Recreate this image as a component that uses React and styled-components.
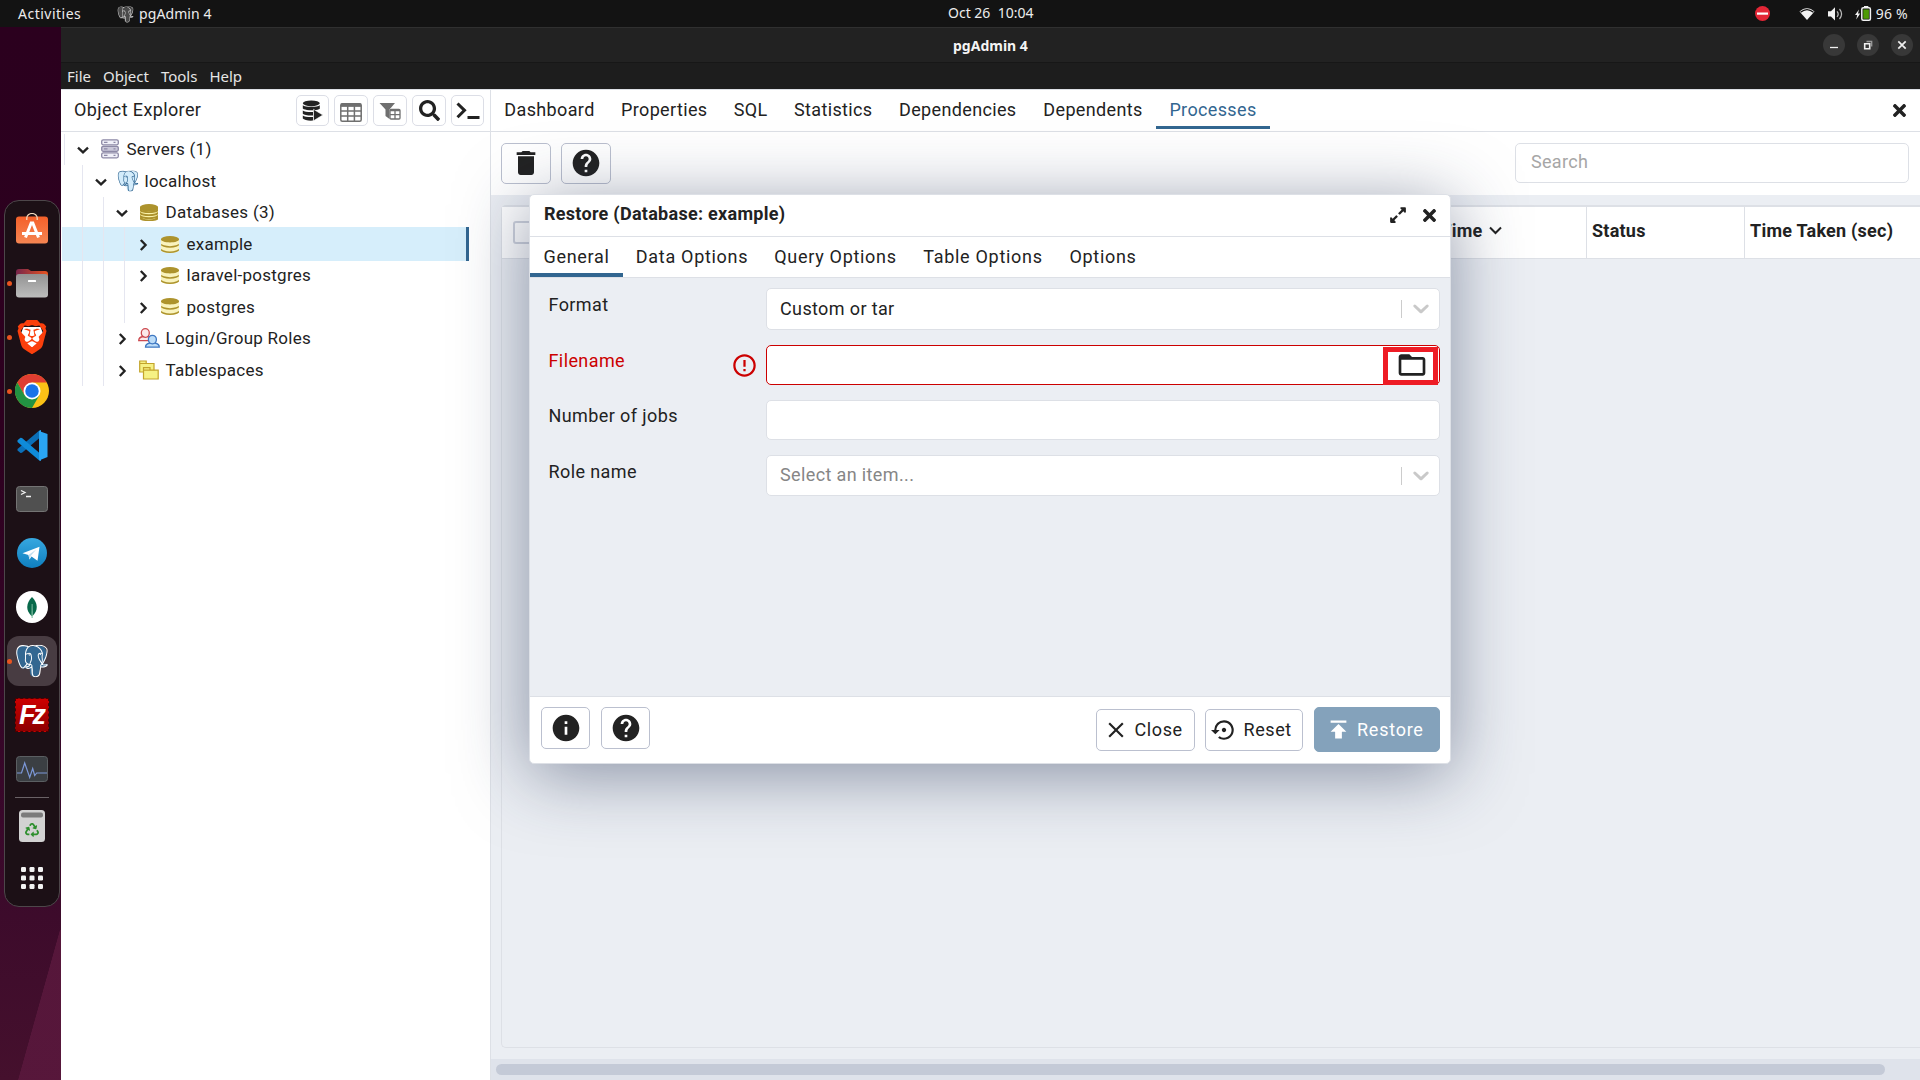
import React from "react";
import styled, { createGlobalStyle, css } from "styled-components";
import {
  MdDelete,
  MdHelp,
  MdInfo,
  MdErrorOutline,
  MdClose,
  MdPublish,
  MdSettingsBackupRestore,
  MdFolderOpen,
} from "react-icons/md";
import { FaSearch, FaTimes, FaExpandAlt, FaRecycle } from "react-icons/fa";
import { SiPostgresql, SiBrave } from "react-icons/si";

const INK = "#222222";
const LINE = "#dde0e6";
const BLUE = "#326690";
const PANEL = "#ebeef3";
const UI = `Roboto, "Liberation Sans", sans-serif`;
const SHELL = `"Noto Sans", "Open Sans", sans-serif`;

const Global = createGlobalStyle`
  html, body { margin: 0; padding: 0; overflow: hidden; background: #131313; }
  * { box-sizing: border-box; }
  svg { display: block; flex: none; }
`;

/* ---------- desktop shell ---------- */
const Screen = styled.div`
  width: 1920px;
  height: 1080px;
  display: flex;
  flex-direction: column;
  overflow: hidden;
  font-family: ${UI};
  color: ${INK};
`;

const TopBar = styled.header`
  height: 27px;
  flex: none;
  display: grid;
  grid-template-columns: 948px 1fr auto;
  align-items: center;
  background: #131313;
  color: #ececec;
  font: 14px/26px ${SHELL};
  white-space: pre;
`;

const TopLeft = styled.div`
  display: flex;
  align-items: center;
  padding-left: 18px;
`;

const Activities = styled.span`
  width: 99px;
  letter-spacing: 0.5px;
`;

const AppName = styled.span`
  margin-left: 5px;
  letter-spacing: 0.1px;
`;

const Clock = styled.span`
  padding-bottom: 2px;
`;

const TopRight = styled.div`
  display: flex;
  align-items: center;
  padding-right: 12px;
  letter-spacing: 0.25px;
`;

const Desktop = styled.div`
  flex: 1;
  display: flex;
  min-height: 0;
`;

const DockStrip = styled.aside`
  width: 61px;
  flex: none;
  padding: 173px 1px 0 4px;
  background: linear-gradient(105.6deg, rgba(84, 22, 56, 0) 0 58%, rgba(90, 24, 61, 0.85) 58.6% 100%) 0 903px / 61px 150px
      no-repeat,
    linear-gradient(#2b001e 0%, #2d001f 40%, #38082a 75%, #45102d 100%);
`;

const Dock = styled.nav`
  width: 56px;
  height: 707px;
  padding-top: 1px;
  border: 1px solid #4d474a;
  border-radius: 15px;
  background: #1c1016;
  display: flex;
  flex-direction: column;
  align-items: center;
`;

const DockItem = styled.div`
  position: relative;
  width: 50px;
  height: ${(p) => p.$h || 54}px;
  display: flex;
  align-items: center;
  justify-content: center;
`;

const DockActive = styled.div`
  width: 50px;
  height: 50px;
  border-radius: 12px;
  background: #483c42;
  display: flex;
  align-items: center;
  justify-content: center;
`;

const RunningDot = styled.i`
  position: absolute;
  left: 0;
  top: 25px;
  width: 5px;
  height: 5px;
  border-radius: 50%;
  background: #e95420;
`;

const DockRule = styled.hr`
  width: 34px;
  height: 1px;
  margin: 1px 0 0;
  border: 0;
  background: #6a6266;
`;

const FileZillaTile = styled.div`
  width: 34px;
  height: 34px;
  border: 1px dashed #4a0000;
  background: linear-gradient(#cc0000, #8e0000);
  color: #fff;
  font: italic 700 27px/32px "Liberation Sans", sans-serif;
  letter-spacing: -3px;
  padding-left: 3px;
`;

/* ---------- pgAdmin window ---------- */
const Window = styled.section`
  position: relative;
  flex: 1;
  display: flex;
  flex-direction: column;
  min-width: 0;
  background: #fff;
`;

const TitleBar = styled.div`
  height: 36px;
  flex: none;
  display: grid;
  grid-template-columns: 892px 1fr auto;
  align-items: center;
  border-top: 1px solid #303030;
  border-bottom: 1px solid #171717;
  background: #222222;
  color: #f4f4f4;
  font: 700 14px/34px ${SHELL};
`;

const WindowTitle = styled.span`
  padding-top: 2px;
  line-height: 32px;
`;

const WindowButtons = styled.div`
  display: flex;
  gap: 12px;
  padding-right: 7px;
`;

const WindowButton = styled.span`
  width: 22px;
  height: 22px;
  border-radius: 50%;
  background: #383838;
`;

const MenuBar = styled.div`
  height: 26px;
  flex: none;
  display: flex;
  gap: 12px;
  padding-left: 6px;
  background: #1d1d1d;
  color: #e6e6e6;
  font: 15px/27px ${SHELL};
`;

const Workspace = styled.div`
  flex: 1;
  display: flex;
  min-height: 0;
  border-top: 1px solid ${LINE};
`;

const Explorer = styled.div`
  width: 430px;
  flex: none;
  border-right: 1px solid ${LINE};
`;

const ExplorerHeader = styled.div`
  height: 42px;
  display: flex;
  align-items: center;
  gap: 5px;
  padding: 0 6px 0 13px;
  border-bottom: 1px solid ${LINE};
`;

const ExplorerTitle = styled.h2`
  flex: 1;
  margin: 0;
  padding-bottom: 2px;
  font-size: 18px;
  font-weight: 400;
  letter-spacing: 0.38px;
`;

const ToolButton = styled.span`
  width: ${(p) => p.$w || 34}px;
  height: 31px;
  padding-top: ${(p) => p.$drop || 0}px;
  display: flex;
  align-items: center;
  justify-content: center;
  border: 1px solid #dcdee6;
  border-radius: 5px;
`;

const Tree = styled.div`
  padding: 1.5px 0 0;
`;

const TreeRow = styled.div`
  height: 31.5px;
  width: 407px;
  margin-left: 1px;
  display: flex;
  align-items: center;
  padding-left: ${(p) => p.$indent}px;
  font-size: 17px;
  letter-spacing: 0.26px;
  white-space: nowrap;
  ${(p) =>
    p.$selected &&
    css`
      height: 34px;
      margin-top: -1px;
      margin-bottom: -1.5px;
      background: #d6eefb;
      border-right: 3px solid ${BLUE};
    `}
`;

const Guide = styled.i`
  width: ${(p) => (p.$last ? 12 : 21)}px;
  height: 100%;
  flex: none;
  border-left: 1px solid #e5e6f0;
`;

const TreeChevron = styled.span`
  width: 14px;
  margin-right: 8.5px;
  display: flex;
  justify-content: center;
  padding-top: 2px;
`;

const TreeIcon = styled.span`
  width: 22px;
  margin-right: 6px;
  display: flex;
  justify-content: center;
`;

const Main = styled.div`
  flex: 1;
  min-width: 0;
  display: flex;
  flex-direction: column;
`;

const TabBar = styled.div`
  height: 42px;
  flex: none;
  display: flex;
  align-items: center;
  padding-right: 11.5px;
  border-bottom: 1px solid ${LINE};
`;

const Tab = styled.span`
  width: ${(p) => p.$w}px;
  height: 39px;
  align-self: flex-start;
  text-align: center;
  font-size: 18px;
  line-height: 40px;
  letter-spacing: 0.36px;
  white-space: nowrap;
  color: ${(p) => (p.$active ? BLUE : INK)};
  border-bottom: 3px solid ${(p) => (p.$active ? BLUE : "transparent")};
`;

const Spacer = styled.span`
  flex: 1;
`;

const Toolbar = styled.div`
  height: 63px;
  flex: none;
  display: flex;
  align-items: flex-start;
  gap: 10px;
  padding: 11px 11px 0 10px;
`;

const OutlineButton = styled.span`
  width: ${(p) => p.$w}px;
  height: ${(p) => p.$h}px;
  display: flex;
  align-items: center;
  justify-content: ${(p) => (p.$start ? "flex-start" : "center")};
  padding-left: ${(p) => p.$start || 0}px;
  padding-bottom: ${(p) => p.$lift || 0}px;
  gap: ${(p) => p.$gap || 0}px;
  border: 1px solid #bbc0cf;
  border-radius: 5px;
  font-size: 18px;
  letter-spacing: 0.6px;
`;

const PrimaryButton = styled(OutlineButton)`
  height: 45px;
  margin-left: 1px;
  border-color: #84a2bb;
  background: #84a2bb;
  color: #fff;
  letter-spacing: 0.75px;
`;

const SearchBox = styled.div`
  width: 394px;
  height: 40px;
  padding-left: 15px;
  border: 1px solid ${LINE};
  border-radius: 5px;
  font-size: 18px;
  line-height: 36px;
  letter-spacing: 0.3px;
  color: #a6a6a6;
`;

const Content = styled.div`
  flex: 1;
  display: flex;
  flex-direction: column;
  padding: 10px 0 11px 10px;
  background: ${PANEL};
`;

const Table = styled.div`
  flex: 1;
  border: 1px solid ${LINE};
  border-top-width: 2px;
  border-right: 0;
  border-radius: 5px 0 0 5px;
`;

const HeadRow = styled.div`
  height: 52px;
  display: flex;
  background: #fff;
  border-bottom: 1px solid ${LINE};
`;

const HeadCell = styled.div`
  width: ${(p) => p.$w}px;
  flex: none;
  display: flex;
  align-items: center;
  justify-content: ${(p) => (p.$end ? "flex-end" : "flex-start")};
  gap: 6px;
  padding: 0 ${(p) => p.$end || 0}px 4px 5px;
  border-right: 1px solid ${LINE};
  font-size: 18px;
  font-weight: 700;
  letter-spacing: 0.24px;
  white-space: nowrap;
`;

const CheckCell = styled(HeadCell)`
  padding: 0 0 0 11px;
`;

const CheckBox = styled.i`
  width: 23px;
  height: 23px;
  border: 2px solid #cfd3dd;
  border-radius: 3px;
`;

const ScrollTrack = styled.div`
  height: 21px;
  flex: none;
  padding: 5px 35px 5px 5px;
  background: #dfe3eb;
`;

const ScrollThumb = styled.div`
  height: 11px;
  border-radius: 6px;
  background: #c4cad7;
`;

/* ---------- restore dialog ---------- */
const Dialog = styled.div`
  position: absolute;
  left: 468px;
  top: 167px;
  width: 922px;
  height: 570px;
  display: flex;
  flex-direction: column;
  border: 1px solid ${LINE};
  border-radius: 5px;
  background: #fff;
  box-shadow: 0 10px 70px rgba(35, 50, 83, 0.5);
  overflow: hidden;
`;

const DialogHeader = styled.div`
  height: 42px;
  flex: none;
  display: flex;
  align-items: center;
  padding: 0 11px 1px 14px;
  border-bottom: 1px solid ${LINE};
`;

const DialogTitle = styled.h1`
  flex: 1;
  margin: 0;
  padding-bottom: 3px;
  font-size: 18px;
  font-weight: 700;
  letter-spacing: 0.28px;
`;

const DialogActions = styled.div`
  display: flex;
  align-items: center;
  gap: 13px;
`;

const DialogTabs = styled.div`
  height: 41px;
  flex: none;
  display: flex;
  border-bottom: 1px solid ${LINE};
`;

const DialogTab = styled(Tab)`
  height: 40px;
  letter-spacing: 0.7px;
  color: ${INK};
  border-bottom-width: 4px;
`;

const Form = styled.div`
  flex: 1;
  display: flex;
  flex-direction: column;
  gap: 15px;
  padding: 10px 10px 0 18.5px;
  background: ${PANEL};
`;

const Field = styled.div`
  display: flex;
  align-items: flex-start;
`;

const Label = styled.label`
  flex: 1;
  font-size: 18px;
  line-height: ${(p) => (p.$low ? 34 : 32)}px;
  letter-spacing: 0.4px;
  color: ${(p) => (p.$error ? "#cc0000" : INK)};
`;

const ErrorMark = styled.span`
  padding: 7px 8px 0 0;
  color: #cc0000;
`;

const Control = styled.div`
  width: 674px;
  height: ${(p) => p.$h || 40}px;
  display: flex;
  align-items: center;
  border: 1px solid ${(p) => (p.$error ? "#cc0000" : LINE)};
  border-radius: 5px;
  background: #fff;
  padding-left: 13px;
  font-size: 18px;
  letter-spacing: 0.37px;
  color: ${(p) => (p.$muted ? "#868686" : INK)};
`;

const ControlValue = styled.span`
  flex: 1;
  padding-bottom: 2px;
`;

const Divider = styled.i`
  width: 1px;
  height: 18px;
  margin-right: 10px;
  background: #cccccc;
`;

const Dropdown = styled.svg`
  margin-right: 9.5px;
`;

const BrowseButton = styled.span`
  width: 55px;
  height: 38px;
  margin: 2px 1px 0 0;
  display: flex;
  align-items: center;
  justify-content: center;
  padding: 0 0 2px 3px;
  border: 5px solid #ee1c25;
  svg { margin: -4px 0; }
`;

const DialogFooter = styled.div`
  height: 67px;
  flex: none;
  display: flex;
  align-items: flex-start;
  padding: 10px 10px 0 11px;
  border-top: 1px solid ${LINE};
`;

const FooterLeft = styled.div`
  flex: 1;
  display: flex;
  gap: 11px;
`;

const FooterRight = styled.div`
  display: flex;
  align-items: center;
  gap: 10px;
`;

/* ---------- drawings ---------- */
const Chevron = ({ open }) => (
  <svg width="14" height="14" viewBox="0 0 14 14" fill="none" stroke={INK} strokeWidth="2.3">
    <path d={open ? "M2 4.6 7 9.4 12 4.6" : "M4.8 2 9.6 7 4.8 12"} />
  </svg>
);

const Elephant = ({ size, line, fill }) => (
  <svg width={size} height={size} viewBox="-.5 -.5 25 25">
    <path
      fill={fill}
      d="M4 1.2C8 .4 9 1 11 1.5 14 .8 18 .3 21 2c3 3 1.5 8-1 12.200 2-.2 4-.4 3.500.600-1 1.700-3.500 2.200-5.700 1.700-.2 2.500 0 5.500-2 6.500-2.800 1-4.800.5-5.200-2-.3-2.500 0-3.500-.6-4-2 .8-3.500.5-5 .5-2-1-4-6.500-4.200-10.500C.6 3.500 1.500 1.800 4 1.200Z"
    />
    <SiPostgresql size={24} color={line} />
  </svg>
);

const ServersIcon = () => (
  <svg width="18" height="20" viewBox="0 0 18 20" fill="#f0f0f8" stroke="#8d89a6" strokeWidth="1.3">
    <rect x=".7" y=".8" width="16.600" height="5" rx="1.500" />
    <rect x=".7" y="7.300" width="16.600" height="5" rx="1.500" fill="#c9c7d8" />
    <rect x=".7" y="13.800" width="16.600" height="5" rx="1.500" />
    <path d="M3 3.300h3.500M3 9.800h3.500M3 16.300h3.500M12.500 3.300h2M12.500 9.800h2M12.500 16.300h2" />
  </svg>
);

const DatabasesIcon = () => (
  <svg width="18" height="17" viewBox="0 0 18 17">
    <path d="M0 3v11c0 1.600 4 3 9 3s9-1.400 9-3V3z" fill="#fbf3a8" />
    <path
      d="M0 5.300c0 1.500 4 2.800 9 2.800s9-1.300 9-2.800M0 8.300c0 1.500 4 2.800 9 2.800s9-1.300 9-2.800M0 11.300c0 1.500 4 2.800 9 2.800s9-1.300 9-2.800M0 13.600c0 1.500 4 2.700 9 2.700s9-1.200 9-2.700"
      fill="none"
      stroke="#ad932d"
      strokeWidth="1.700"
    />
    <path d="M0 2.800v2.400c0 1 3 2.300 9 2.300s9-1.300 9-2.300V2.800z" fill="#ad932d" />
    <ellipse cx="9" cy="3" rx="9" ry="2.900" fill="#ad932d" />
  </svg>
);

const DatabaseIcon = () => (
  <svg width="18" height="17" viewBox="0 0 18 17">
    <path d="M0 3v11c0 1.600 4 3 9 3s9-1.400 9-3V3z" fill="#f9f3bd" />
    <path
      d="M.3 8.200c0 1.400 4 2.700 8.700 2.700s8.700-1.300 8.700-2.700M.3 13.300c0 1.500 4 2.900 8.700 2.900s8.700-1.400 8.700-2.900"
      fill="none"
      stroke="#ad932d"
      strokeWidth="1.500"
    />
    <path d="M0 3v.5C0 5 4 6.400 9 6.400s9-1.400 9-2.900V3z" fill="#ad932d" />
    <ellipse cx="9" cy="3" rx="9" ry="3" fill="#ad932d" />
  </svg>
);

const RolesIcon = () => (
  <svg width="22" height="20" viewBox="0 0 22 20" strokeWidth="1.300">
    <g fill="#fbe9ea" stroke="#cc4a50">
      <path d="M.7 12.700c0-2.500 2-3.800 4.500-4.200h4c2.500.4 4.500 1.700 4.500 4.200z" />
      <ellipse cx="7.300" cy="5" rx="4" ry="4.300" />
    </g>
    <g fill="#bcdcf8" stroke="#3f78c2">
      <path d="M7.500 19.200c0-2.500 1.800-3.700 4.300-4.200h5.200c2.500.5 4.300 1.700 4.300 4.200z" />
      <ellipse cx="14.400" cy="11.600" rx="4" ry="4.300" />
    </g>
  </svg>
);

const TablespacesIcon = () => (
  <svg width="20" height="20" viewBox="0 0 20 20" fill="#f6f184" stroke="#c3a42b" strokeWidth="1.200">
    <path d="M.7 12V1h6.500v2.500H15V12zM.7 3.500h6.500" />
    <path d="M4.500 19V7.700H11v2.500h8.200V19zM4.500 10.200H11" />
  </svg>
);

const QueryToolIcon = () => (
  <svg width="21" height="22" viewBox="0 0 21 22" fill={INK}>
    <ellipse cx="9.300" cy="3.300" rx="8.500" ry="2.900" />
    <path d="M.8 5.300c2 2 15 2 17 0v3.500c-1 .7-3 1.300-5.600 1.500H7C4 10 2 9.600.8 8.600z" />
    <path d="M.8 10.400c1.500 1.300 6 1.700 10.200 1.500v3.600c-4.500.2-9-.3-10.200-1.700z" />
    <path d="M.8 15.400c1.500 1.300 6 1.700 10.200 1.500v3.700c-5 .3-9-.6-10.200-2z" />
    <path d="M11.500 9.300 20.800 15l-9.300 5.800z" stroke="#fff" strokeWidth=".6" />
  </svg>
);

const TableGridIcon = () => (
  <svg width="22" height="19" viewBox="0 0 22 19" fill="none" stroke="#6f6f6f" strokeWidth="1.500">
    <rect x=".8" y=".8" width="20.400" height="17.400" rx="1.500" />
    <path d="M.8 3h20.400M.8 8h20.400M.8 13h20.400M7.700 3v15M14.400 3v15" />
    <path d="M1 2h20" strokeWidth="3" />
  </svg>
);

const FilterGridIcon = () => (
  <svg width="22" height="19" viewBox="0 0 22 19" fill="none" stroke="#6f6f6f" strokeWidth="1.300">
    <path d="M.5 1h15.500L10.500 7.500V17L6.500 14V7.500z" fill="#6f6f6f" stroke="none" />
    <rect x="11" y="7.500" width="10" height="9.500" rx="1" fill="#fff" />
    <path d="M11 8.500h10M11 12.700h10M16 9v8" />
  </svg>
);

const TerminalIcon = () => (
  <svg width="24" height="18" viewBox="0 0 24 18" fill="none" stroke={INK} strokeWidth="3">
    <path d="M1.500 1.500 8.500 8.300 1.500 15.200M11.500 15.500H23.500" />
  </svg>
);

const SelectArrow = () => (
  <Dropdown width="18" height="12" viewBox="0 0 18 12" fill="none" stroke="#c9c9c9" strokeWidth="3" strokeLinecap="round" strokeLinejoin="round">
    <path d="M2.800 3 9 8.800 15.200 3" />
  </Dropdown>
);

const StoreGlyph = () => (
  <svg width="32" height="32" viewBox="0 1 32 32">
    <defs>
      <linearGradient id="store" x1="0" y1="0" x2="0" y2="1">
        <stop offset="0" stopColor="#f4602a" />
        <stop offset="1" stopColor="#f58552" />
      </linearGradient>
    </defs>
    <rect y="4.500" width="32" height="27" rx="3" fill="url(#store)" />
    <path d="M10.800 8V6a5.200 4.500 0 0 1 10.400 0v2" fill="none" stroke="#f3dcc0" strokeWidth="1.200" />
    <path d="M9.500 25.500 15.200 11h1.600l5.700 14.500M6 21.500h20" fill="none" stroke="#fff" strokeWidth="3" />
  </svg>
);

const FilesGlyph = () => (
  <svg width="32" height="30" viewBox="0 0 32 30">
    <defs>
      <linearGradient id="tab" x1="0" x2="1">
        <stop offset="0" stopColor="#77254b" />
        <stop offset="1" stopColor="#e95420" />
      </linearGradient>
      <linearGradient id="files" x1="0" y1="0" x2="0" y2="1">
        <stop offset="0" stopColor="#929292" />
        <stop offset="1" stopColor="#bdbdbd" />
      </linearGradient>
    </defs>
    <path d="M0 4a3 3 0 0 1 3-3h9l3 2h14a3 3 0 0 1 3 3v8H0z" fill="url(#tab)" />
    <rect y="6" width="32" height="23.500" rx="3" fill="url(#files)" />
    <rect x="12" y="12" width="8" height="2" rx=".5" fill="#fff" />
  </svg>
);

const BraveGlyph = () => (
  <svg width="34" height="34" viewBox="0 0 24 24">
    <path d="M6 5h12l2 5-3 7-5 4-5-4-3-7z" fill="#fff" />
    <SiBrave size={24} color="#fb3f0c" />
  </svg>
);

const ChromeGlyph = () => (
  <svg width="34" height="34" viewBox="0 0 48 48">
    <circle cx="24" cy="24" r="24" fill="#fbc116" />
    <path d="M24 12h20.800A24 24 0 0 0 3.200 12L13.600 30z" fill="#df3d31" />
    <path d="M3.200 12A24 24 0 0 0 24 48l10.400-18L24 33 13.600 30z" fill="#229342" />
    <circle cx="24" cy="24" r="12" fill="#fff" />
    <circle cx="24" cy="24" r="9.500" fill="#1a73e8" />
  </svg>
);

const CodeGlyph = () => (
  <svg width="31" height="31" viewBox="0 0 31 31">
    <path d="M22 1 30.500 4v23L22 30.500z" fill="#2aa5f2" />
    <path d="M22 .8 22.500 8 5 22.800 3.500 23 .5 20.500V19z" fill="#0b6fb8" />
    <path d="M22 30.300 22.500 23 5 8 3.500 7.800.5 10.300V12z" fill="#0f8bd9" />
    <path d="M22 .8 24 0v31l-2-.7z" fill="#2aa5f2" />
  </svg>
);

const ConsoleGlyph = () => (
  <svg width="32" height="26" viewBox="0 0 32 26">
    <rect x=".5" y=".5" width="31" height="25" rx="3" fill="#505050" stroke="#747474" />
    <path d="M5 4.500 9 6.500 5 8.500M10 10.500h5" fill="none" stroke="#f2f2f2" strokeWidth="1.300" />
  </svg>
);

const TelegramGlyph = () => (
  <svg width="30" height="30" viewBox="0 0 30 30">
    <defs>
      <linearGradient id="tg" x1="0" y1="0" x2="0" y2="1">
        <stop offset="0" stopColor="#37a8e0" />
        <stop offset="1" stopColor="#0f7fbf" />
      </linearGradient>
    </defs>
    <circle cx="15" cy="15" r="15" fill="url(#tg)" />
    <path d="M5.500 15.300 22.500 8.700 20.500 22.800 14.500 18.500 12.500 21.500 11.500 17z" fill="#fff" />
    <path d="M11.500 17 19.500 11.300 13.800 17.800 12.500 21.500z" fill="#c3dff0" />
  </svg>
);

const MongoGlyph = () => (
  <svg width="32" height="32" viewBox="0 0 32 32">
    <circle cx="16" cy="16" r="16" fill="#fff" />
    <path d="M16 6c6 6 6.500 13.500.5 19h-1C9.500 19.500 10 12 16 6z" fill="#08694a" />
    <path d="M15.700 13h.8l.3 14h-1.300z" fill="#8fc9ae" />
  </svg>
);

const MonitorGlyph = () => (
  <svg width="32" height="26" viewBox="0 0 32 26">
    <rect x=".5" y=".5" width="31" height="25" rx="3" fill="#3b3f43" stroke="#5b5f62" />
    <path d="M1 17h4.500l3.200-10 5 14.500 3-9 2 7 2-2.500H31" fill="none" stroke="#7c98d8" strokeWidth="1.200" />
  </svg>
);

const TrashGlyph = () => (
  <svg width="26" height="32" viewBox="0 0 26 32">
    <rect width="26" height="32" rx="3.500" fill="#d2d2d2" />
    <rect x="2" y="2.500" width="22" height="5" rx="2" fill="#7b7b7b" />
    <g transform="translate(6 13)">
      <FaRecycle size={14} color="#2d8f2d" />
    </g>
  </svg>
);

const AppsGlyph = () => (
  <svg width="22" height="22" viewBox="0 0 22 22" fill="#f2f2f2">
    {[0, 8.5, 17].map((y) => [0, 8.5, 17].map((x) => <rect key={`${x}-${y}`} x={x} y={y} width="5" height="5" rx="1.200" />))}
  </svg>
);

const StatusIcons = () => (
  <svg width="122" height="26" viewBox="1754 0 122 26">
    <circle cx="1762.500" cy="12.500" r="7.500" fill="#e32636" />
    <rect x="1757" y="11.500" width="11" height="2.200" fill="#fff" />
    <path d="M1799.500 10.500c4.500-4.500 10.500-4.500 15 0L1807 19z" fill="#f2f2f2" />
    <path d="M1800.500 11.300c4-3.300 9-3.300 13 0" fill="none" stroke="#131313" strokeWidth="1.300" />
    <path d="M1828 10.300h3l4-4V19.600l-4-4h-3z" fill="#f2f2f2" />
    <path d="M1837 10.300c1.300 1.500 1.300 4 0 5.500M1839.500 8c2.500 3 2.500 7 0 10" fill="none" stroke="#bbb" strokeWidth="1.200" />
    <path d="M1859 8.500 1855 14h2.200l-1 4.500 4-6h-2.200z" fill="#f2f2f2" />
    <rect x="1861.800" y="6.800" width="8.600" height="12.400" rx="1.500" fill="none" stroke="#f2f2f2" strokeWidth="1.500" />
    <rect x="1863.300" y="8.500" width="5.600" height="9.300" fill="#4e9a06" />
    <rect x="1864" y="5" width="4.300" height="2" fill="#f2f2f2" />
  </svg>
);

const WindowGlyph = ({ kind }) => (
  <svg width="22" height="22" viewBox="0 0 22 22" fill="none" stroke="#f0f0f0" strokeWidth="1.300">
    {kind === "min" && <path d="M7 13.500h8" />}
    {kind === "max" && (
      <>
        <path d="M9.500 7.500H14.700V12.500" stroke="#9a9a9a" />
        <path d="M7.700 9.700h5v5h-5z" strokeWidth="1.600" />
      </>
    )}
    {kind === "close" && <path d="M7.300 7.300 14.700 14.700M14.700 7.300 7.300 14.700" strokeWidth="1.700" />}
  </svg>
);

/* ---------- data ---------- */
const dockItems = [
  { glyph: <StoreGlyph /> },
  { glyph: <FilesGlyph />, running: true },
  { glyph: <BraveGlyph />, running: true },
  { glyph: <ChromeGlyph />, running: true },
  { glyph: <CodeGlyph /> },
  { glyph: <ConsoleGlyph /> },
  { glyph: <TelegramGlyph /> },
  { glyph: <MongoGlyph /> },
  { glyph: <Elephant size={34} line="#ffffff" fill="#336791" />, running: true, active: true },
  { glyph: <FileZillaTile>Fz</FileZillaTile> },
  { glyph: <MonitorGlyph /> },
];

const treeRows = [
  { text: "Servers (1)", indent: 2, guides: 1, open: true, icon: <ServersIcon /> },
  { text: "localhost", indent: 20, guides: 1, open: true, icon: <Elephant size={22} line="#2b618e" fill="#d3ecfb" /> },
  { text: "Databases (3)", indent: 20, guides: 2, open: true, icon: <DatabasesIcon /> },
  { text: "example", indent: 20, guides: 3, icon: <DatabaseIcon />, selected: true },
  { text: "laravel-postgres", indent: 20, guides: 3, icon: <DatabaseIcon /> },
  { text: "postgres", indent: 20, guides: 3, icon: <DatabaseIcon /> },
  { text: "Login/Group Roles", indent: 20, guides: 2, icon: <RolesIcon /> },
  { text: "Tablespaces", indent: 20, guides: 2, icon: <TablespacesIcon /> },
];

const tabs = [
  ["Dashboard", 117],
  ["Properties", 112.5],
  ["SQL", 60.5],
  ["Statistics", 104.5],
  ["Dependencies", 144.5],
  ["Dependents", 126],
  ["Processes", 114],
];

const dialogTabs = [
  ["General", 93],
  ["Data Options", 138],
  ["Query Options", 149],
  ["Table Options", 146],
  ["Options", 94],
];

export default function App() {
  return (
    <Screen>
      <Global />
      <TopBar>
        <TopLeft>
          <Activities>Activities</Activities>
          <Elephant size={17} line="#d8d8d8" fill="#4a4a4a" />
          <AppName>pgAdmin 4</AppName>
        </TopLeft>
        <Clock>{"Oct 26  10:04"}</Clock>
        <TopRight>
          <StatusIcons />
          <span>96 %</span>
        </TopRight>
      </TopBar>
      <Desktop>
        <DockStrip>
          <Dock>
            {dockItems.map((d, i) => (
              <DockItem key={i}>
                {d.active ? <DockActive>{d.glyph}</DockActive> : d.glyph}
                {d.running && <RunningDot />}
              </DockItem>
            ))}
            <DockRule />
            <DockItem $h={56}>
              <TrashGlyph />
            </DockItem>
            <DockItem $h={48}>
              <AppsGlyph />
            </DockItem>
          </Dock>
        </DockStrip>
        <Window>
          <TitleBar>
            <span />
            <WindowTitle>pgAdmin 4</WindowTitle>
            <WindowButtons>
              {["min", "max", "close"].map((k) => (
                <WindowButton key={k}>
                  <WindowGlyph kind={k} />
                </WindowButton>
              ))}
            </WindowButtons>
          </TitleBar>
          <MenuBar>
            {["File", "Object", "Tools", "Help"].map((m) => (
              <span key={m}>{m}</span>
            ))}
          </MenuBar>
          <Workspace>
            <Explorer>
              <ExplorerHeader>
                <ExplorerTitle>Object Explorer</ExplorerTitle>
                <ToolButton $w={33} $drop={1}><QueryToolIcon /></ToolButton>
                <ToolButton $drop={4}><TableGridIcon /></ToolButton>
                <ToolButton $drop={2}><FilterGridIcon /></ToolButton>
                <ToolButton><FaSearch size={21} /></ToolButton>
                <ToolButton $w={33}><TerminalIcon /></ToolButton>
              </ExplorerHeader>
              <Tree>
                {treeRows.map((r) => (
                  <TreeRow key={r.text} $indent={r.indent} $selected={r.selected}>
                    {Array.from({ length: r.guides }, (_, i) => (
                      <Guide key={i} $last={i === r.guides - 1} />
                    ))}
                    <TreeChevron><Chevron open={r.open} /></TreeChevron>
                    <TreeIcon>{r.icon}</TreeIcon>
                    {r.text}
                  </TreeRow>
                ))}
              </Tree>
            </Explorer>
            <Main>
              <TabBar>
                {tabs.map(([name, w]) => (
                  <Tab key={name} $w={w} $active={name === "Processes"}>{name}</Tab>
                ))}
                <Spacer />
                <FaTimes size={19} />
              </TabBar>
              <Toolbar>
                <OutlineButton $w={50} $h={41} $lift={1}><MdDelete size={32} /></OutlineButton>
                <OutlineButton $w={50} $h={41} $lift={1}><MdHelp size={32} /></OutlineButton>
                <Spacer />
                <SearchBox>Search</SearchBox>
              </Toolbar>
              <Content>
                <Table>
                  <HeadRow>
                    <CheckCell $w={884}><CheckBox /></CheckCell>
                    <HeadCell $w={201} $end={84.5}>
                      Start Time
                      <svg width="13" height="9" viewBox="0 0 13 9" fill="none" stroke={INK} strokeWidth="2">
                        <path d="M1 1.500 6.500 7 12 1.500" />
                      </svg>
                    </HeadCell>
                    <HeadCell $w={158}>Status</HeadCell>
                    <HeadCell $w={200}>Time Taken (sec)</HeadCell>
                  </HeadRow>
                </Table>
              </Content>
              <ScrollTrack><ScrollThumb /></ScrollTrack>
            </Main>
          </Workspace>
          <Dialog>
            <DialogHeader>
              <DialogTitle>Restore (Database: example)</DialogTitle>
              <DialogActions>
                <FaExpandAlt size={18} />
                <FaTimes size={19} />
              </DialogActions>
            </DialogHeader>
            <DialogTabs>
              {dialogTabs.map(([name, w]) => (
                <DialogTab key={name} $w={w} $active={name === "General"}>{name}</DialogTab>
              ))}
            </DialogTabs>
            <Form>
              <Field>
                <Label $low>Format</Label>
                <Control $h={42}>
                  <ControlValue>Custom or tar</ControlValue>
                  <Divider />
                  <SelectArrow />
                </Control>
              </Field>
              <Field>
                <Label $error>Filename</Label>
                <ErrorMark><MdErrorOutline size={27} /></ErrorMark>
                <Control $error>
                  <Spacer />
                  <BrowseButton><MdFolderOpen size={32} /></BrowseButton>
                </Control>
              </Field>
              <Field>
                <Label>Number of jobs</Label>
                <Control />
              </Field>
              <Field>
                <Label $low>Role name</Label>
                <Control $h={41} $muted>
                  <ControlValue>Select an item...</ControlValue>
                  <Divider />
                  <SelectArrow />
                </Control>
              </Field>
            </Form>
            <DialogFooter>
              <FooterLeft>
                <OutlineButton $w={49} $h={42}><MdInfo size={32} /></OutlineButton>
                <OutlineButton $w={49} $h={42}><MdHelp size={32} /></OutlineButton>
              </FooterLeft>
              <FooterRight>
                <OutlineButton $w={99} $h={42} $start={6} $gap={5.5}><MdClose size={26} />Close</OutlineButton>
                <OutlineButton $w={98} $h={42} $start={5} $gap={6.5}><MdSettingsBackupRestore size={26} />Reset</OutlineButton>
                <PrimaryButton $w={126} $start={10} $gap={5}><MdPublish size={27} />Restore</PrimaryButton>
              </FooterRight>
            </DialogFooter>
          </Dialog>
        </Window>
      </Desktop>
    </Screen>
  );
}
